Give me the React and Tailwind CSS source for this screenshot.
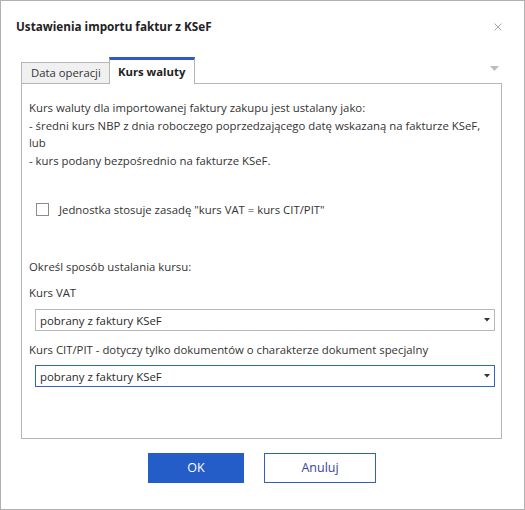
import React from "react";

const font = { fontFamily: '"Open Sans", "Noto Sans", sans-serif' };

function SelectBox({ value, active }) {
  return (
    <div
      className={`ml-[6px] mr-[6px] h-[22px] flex items-center justify-between bg-white border pl-[4px] pr-[3px] ${
        active ? "border-[#2f63c4]" : "border-[#b9b9b9]"
      }`}
    >
      <span className="text-[11.4px] text-[#2a2a2a] leading-none">{value}</span>
      <svg width="6" height="4" viewBox="0 0 6 4" className="mr-[1px]">
        <path d="M0 0H6L3 3.5Z" fill="#333" />
      </svg>
    </div>
  );
}

export default function App() {
  return (
    <div
      className="w-[525px] h-[510px] bg-white border border-[#b1b1b1] flex flex-col text-[#2b2b2b]"
      style={font}
    >
      {/* Header */}
      <div className="h-[56px] flex items-start justify-between pl-[15px] pr-[22px] pt-[16px]">
        <h1 className="text-[11.7px] leading-[18px] font-bold text-[#222]">
          Ustawienia importu faktur z KSeF
        </h1>
        <svg width="8" height="8" viewBox="0 0 8 8" className="mt-[6px]">
          <path d="M0.5 0.5L7.5 7.5M7.5 0.5L0.5 7.5" stroke="#a9a9a9" strokeWidth="1" />
        </svg>
      </div>

      {/* Tabs */}
      <div className="ml-[20px] mr-[22px] flex items-end relative">
        <div className="h-[21px] w-[88px] bg-[#f0f0f0] border-l border-t border-[#b6b6b6] pl-[9px] flex items-center">
          <span className="text-[11.3px] leading-none text-[#333]">Data operacji</span>
        </div>
        <div className="h-[27px] w-[86px] bg-white border-x border-[#b6b6b6] border-t-[3px] border-t-[#2a5cc4] pl-[8px] flex items-center relative z-10 mb-[-1px]">
          <span className="text-[11.3px] leading-none font-bold text-[#222]">Kurs waluty</span>
        </div>
        <div className="flex-1" />
        <svg width="9" height="5" viewBox="0 0 9 5" className="mb-[12px] mr-[3px]">
          <path d="M0 0H9L4.5 5Z" fill="#bdbdbd" />
        </svg>
      </div>

      {/* Panel */}
      <div className="ml-[20px] mr-[22px] h-[356px] border border-[#b6b6b6] pt-[15px] pl-[7px] flex flex-col">
        <div className="text-[11.35px] leading-[17.6px] text-[#333] whitespace-nowrap">
          Kurs waluty dla importowanej faktury zakupu jest ustalany jako:
          <br />- średni kurs NBP z dnia roboczego poprzedzającego datę wskazaną na fakturze KSeF,
          <br />
          lub
          <br />- kurs podany bezpośrednio na fakturze KSeF.
        </div>

        <label className="mt-[31px] h-[18px] flex items-center ml-[7px]">
          <span className="w-[13px] h-[13px] border border-[#8c8c8c] bg-white" />
          <span className="ml-[10px] text-[11.35px] leading-none text-[#333]">
            Jednostka stosuje zasadę "kurs VAT = kurs CIT/PIT"
          </span>
        </label>

        <div className="mt-[39px] h-[18px] flex items-center text-[11.35px] text-[#333]">
          Określ sposób ustalania kursu:
        </div>
        <div className="mt-[8px] h-[18px] flex items-center text-[11.35px] text-[#333]">Kurs VAT</div>
        <div className="mt-[8px]">
          <SelectBox value="pobrany z faktury KSeF" />
        </div>
        <div className="mt-[9px] h-[18px] flex items-center text-[11.35px] text-[#333]">
          Kurs CIT/PIT - dotyczy tylko dokumentów o charakterze dokument specjalny
        </div>
        <div className="mt-[7px]">
          <SelectBox value="pobrany z faktury KSeF" active />
        </div>
      </div>

      {/* Footer buttons */}
      <div className="mt-[14px] flex justify-center gap-[20px] pr-[1px]">
        <button className="w-[96px] h-[30px] bg-[#255dc8] text-white text-[12.5px] leading-none">
          OK
        </button>
        <button className="w-[112px] h-[30px] bg-white border border-[#2f5fc6] text-[#3a3f9c] text-[12.5px] leading-none">
          Anuluj
        </button>
      </div>
    </div>
  );
}
